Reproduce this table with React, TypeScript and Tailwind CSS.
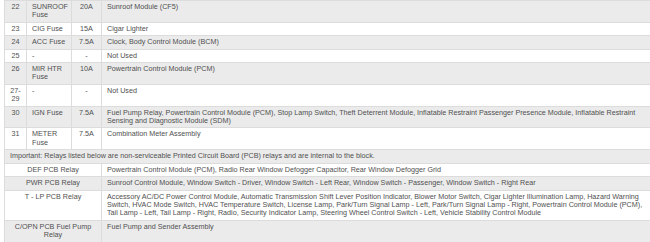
const fuses = [
  { no: "22", name: "SUNROOF Fuse", amp: "20A", desc: "Sunroof Module (CF5)" },
  { no: "23", name: "CIG Fuse", amp: "15A", desc: "Cigar Lighter" },
  { no: "24", name: "ACC Fuse", amp: "7.5A", desc: "Clock, Body Control Module (BCM)" },
  { no: "25", name: "-", amp: "-", desc: "Not Used" },
  { no: "26", name: "MIR HTR Fuse", amp: "10A", desc: "Powertrain Control Module (PCM)" },
  { no: "27-29", name: "-", amp: "-", desc: "Not Used" },
  {
    no: "30",
    name: "IGN Fuse",
    amp: "7.5A",
    desc: "Fuel Pump Relay, Powertrain Control Module (PCM), Stop Lamp Switch, Theft Deterrent Module, Inflatable Restraint Passenger Presence Module, Inflatable Restraint Sensing and Diagnostic Module (SDM)",
  },
  { no: "31", name: "METER Fuse", amp: "7.5A", desc: "Combination Meter Assembly" },
];

const relays = [
  {
    name: "DEF PCB Relay",
    desc: "Powertrain Control Module (PCM), Radio Rear Window Defogger Capacitor, Rear Window Defogger Grid",
  },
  {
    name: "PWR PCB Relay",
    desc: "Sunroof Control Module, Window Switch - Driver, Window Switch - Left Rear, Window Switch - Passenger, Window Switch - Right Rear",
  },
  {
    name: "T - LP PCB Relay",
    desc: "Accessory AC/DC Power Control Module, Automatic Transmission Shift Lever Position Indicator, Blower Motor Switch, Cigar Lighter Illumination Lamp, Hazard Warning Switch, HVAC Mode Switch, HVAC Temperature Switch, License Lamp, Park/Turn Signal Lamp - Left, Park/Turn Signal Lamp - Right, Powertrain Control Module (PCM), Tail Lamp - Left, Tail Lamp - Right, Radio, Security Indicator Lamp, Steering Wheel Control Switch - Left, Vehicle Stability Control Module",
  },
  { name: "C/OPN PCB Fuel Pump Relay", desc: "Fuel Pump and Sender Assembly" },
];

const cell = "border border-[#dcdcdc] px-[5px] py-[2px] align-top";

export default function App() {
  let row = 0;
  const bg = () => (row++ % 2 === 0 ? "bg-[#ebebeb]" : "bg-white");

  return (
    <div className="w-[650px] h-[242px] overflow-hidden bg-white">
      <table
        className="ml-[4px] w-[647px] table-fixed border-collapse text-[7.2px] leading-[8.4px] text-[#505050]"
        style={{ fontFamily: '"Liberation Sans", Arial, sans-serif' }}
      >
        <colgroup>
          <col className="w-[22px]" />
          <col className="w-[45px]" />
          <col className="w-[30px]" />
          <col />
        </colgroup>
        <tbody>
          {fuses.map((f) => (
            <tr key={f.no} className={bg()}>
              <td className={`${cell} text-center`}>{f.no}</td>
              <td className={cell}>{f.name}</td>
              <td className={`${cell} text-center`}>{f.amp}</td>
              <td className={cell}>{f.desc}</td>
            </tr>
          ))}
          <tr className={bg()}>
            <td colSpan={4} className={cell}>
              Important: Relays listed below are non-serviceable Printed Circuit Board (PCB) relays and are internal to the block.
            </td>
          </tr>
          {relays.map((r) => (
            <tr key={r.name} className={bg()}>
              <td colSpan={3} className={`${cell} text-center`}>
                {r.name}
              </td>
              <td className={cell}>{r.desc}</td>
            </tr>
          ))}
        </tbody>
      </table>
    </div>
  );
}
